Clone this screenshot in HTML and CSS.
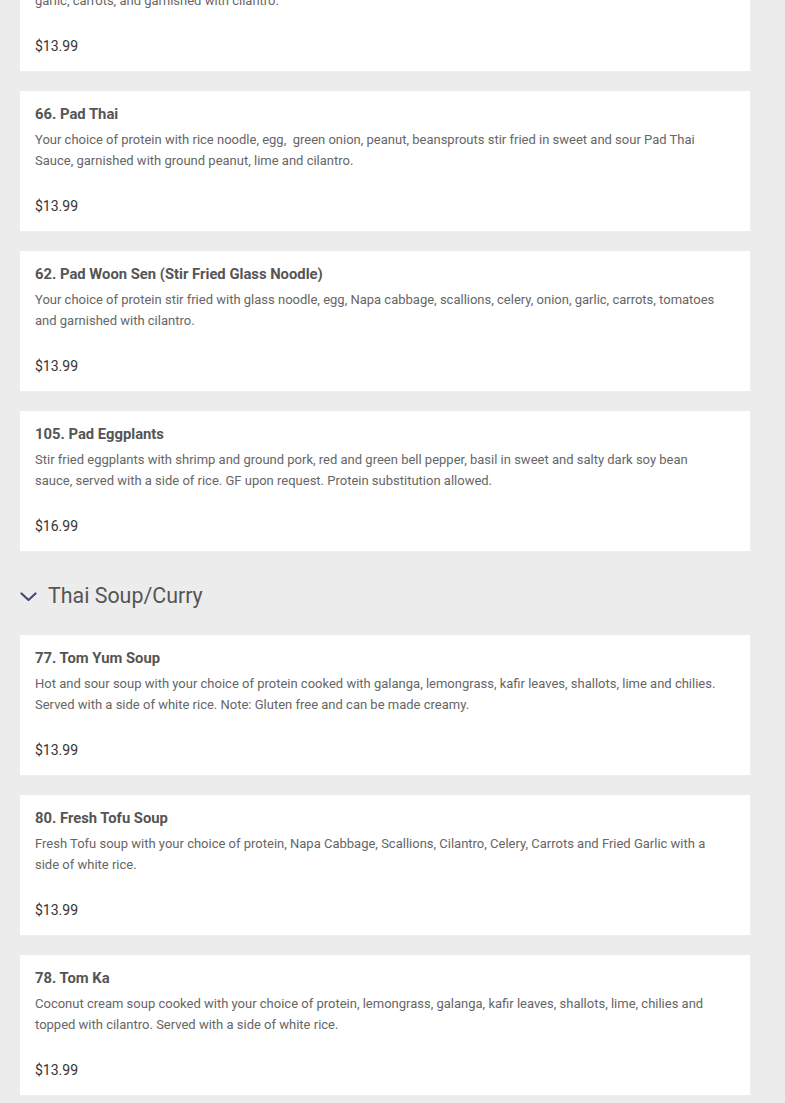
FILE: index.html
```html
<!DOCTYPE html>
<html>
<head>
<meta charset="utf-8">
<link rel="stylesheet" href="styles.css">
</head>
<body>
<div class="menu">
  <div class="items">
    <div class="card">
      <div class="title">65. Pad Kee Mao (Drunken Noodle)</div>
      <div class="desc">Your choice of protein stir fried with flat rice noodle, egg, basil, bell pepper, onion, tomatoes, chilies,<br>garlic, carrots, and garnished with cilantro.</div>
      <div class="price">$13.99</div>
    </div>
    <div class="card">
      <div class="title">66. Pad Thai</div>
      <div class="desc">Your choice of protein with rice noodle, egg, &nbsp;green onion, peanut, beansprouts stir fried in sweet and sour Pad Thai Sauce, garnished with ground peanut, lime and cilantro.</div>
      <div class="price">$13.99</div>
    </div>
    <div class="card">
      <div class="title">62. Pad Woon Sen (Stir Fried Glass Noodle)</div>
      <div class="desc">Your choice of protein stir fried with glass noodle, egg, Napa cabbage, scallions, celery, onion, garlic, carrots, tomatoes and garnished with cilantro.</div>
      <div class="price">$13.99</div>
    </div>
    <div class="card">
      <div class="title">105. Pad Eggplants</div>
      <div class="desc">Stir fried eggplants with shrimp and ground pork, red and green bell pepper, basil in sweet and salty dark soy bean sauce, served with a side of rice. GF upon request. Protein substitution allowed.</div>
      <div class="price">$16.99</div>
    </div>
  </div>

  <div class="section-head">
    <svg class="chevron" width="17" height="10" viewBox="0 0 17 10"><path d="M1.5 1.5 L8.5 8 L15.5 1.5" fill="none" stroke="#3e4d75" stroke-width="2.2" stroke-linecap="round" stroke-linejoin="round"/></svg>
    <span class="section-title">Thai Soup/Curry</span>
  </div>

  <div class="items">
    <div class="card">
      <div class="title">77. Tom Yum Soup</div>
      <div class="desc">Hot and sour soup with your choice of protein cooked with galanga, lemongrass, kafir leaves, shallots, lime and chilies. Served with a side of white rice. Note: Gluten free and can be made creamy.</div>
      <div class="price">$13.99</div>
    </div>
    <div class="card">
      <div class="title">80. Fresh Tofu Soup</div>
      <div class="desc">Fresh Tofu soup with your choice of protein, Napa Cabbage, Scallions, Cilantro, Celery, Carrots and Fried Garlic with a side of white rice.</div>
      <div class="price">$13.99</div>
    </div>
    <div class="card">
      <div class="title">78. Tom Ka</div>
      <div class="desc">Coconut cream soup cooked with your choice of protein, lemongrass, galanga, kafir leaves, shallots, lime, chilies and topped with cilantro. Served with a side of white rice.</div>
      <div class="price">$13.99</div>
    </div>
  </div>
</div>
</body>
</html>
```

FILE: styles.css
```css
html, body {
  margin: 0;
  padding: 0;
  background: #ececec;
}
body {
  font-family: Roboto, "Liberation Sans", sans-serif;
  overflow: hidden;
}
.menu {
  margin-top: -69px;
  padding: 0 35px 8px 20px;
}
.items {
  display: flex;
  flex-direction: column;
  gap: 20px;
}
.card {
  background: #fff;
  padding: 15px 15px 16px;
}
.title {
  font-size: 14.8px;
  line-height: 17px;
  font-weight: 700;
  color: #555;
}
.desc {
  margin-top: 6px;
  font-size: 13px;
  line-height: 21px;
  color: #666;
  height: 42px;
  max-width: 685px;
}
.price {
  margin-top: 26px;
  font-size: 14px;
  line-height: 18px;
  color: #333;
}
.section-head {
  display: flex;
  align-items: center;
  height: 30px;
  padding: 30px 0 24px;
}
.chevron {
  display: block;
  margin-right: 11px;
  margin-top: 1px;
}
.section-title {
  font-size: 21.4px;
  line-height: 30px;
  color: #555;
}
```
